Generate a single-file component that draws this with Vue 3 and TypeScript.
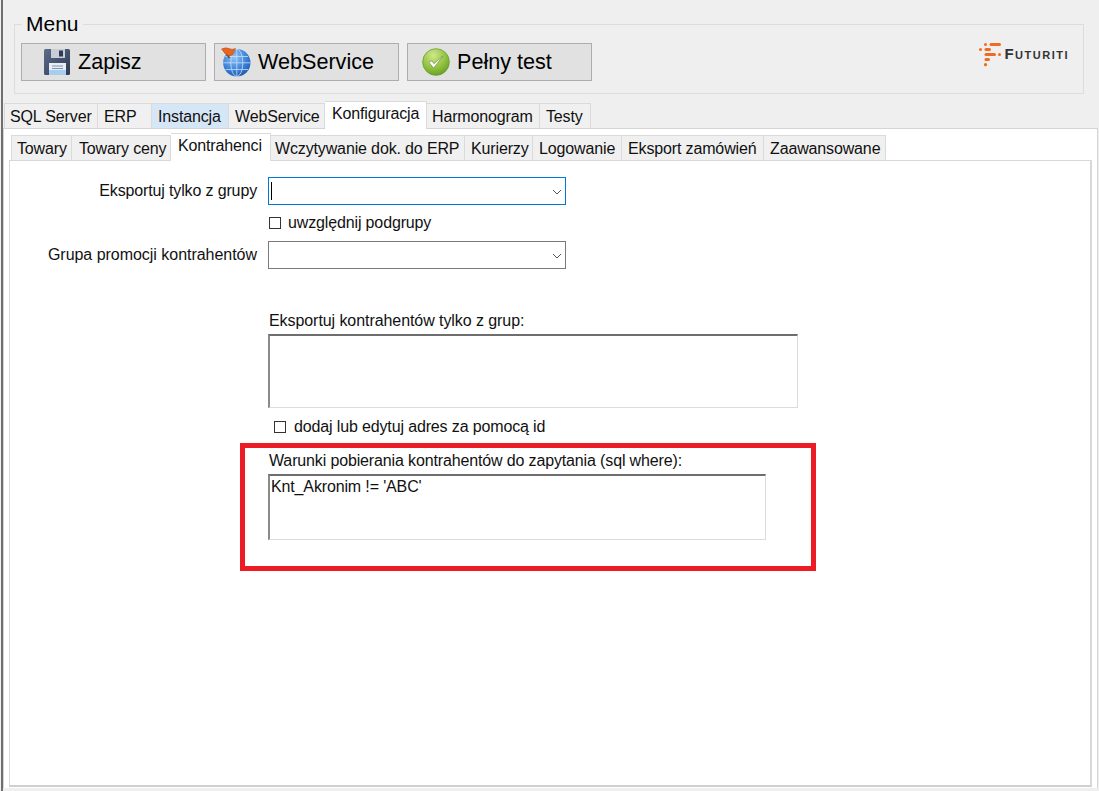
<script setup lang="ts">
interface Tab { label: string; width: number; pad: number; active?: boolean; hint?: boolean }
const mainTabs: Tab[] = [
  { label: 'SQL Server', width: 94, pad: 5 },
  { label: 'ERP', width: 54, pad: 6 },
  { label: 'Instancja', width: 77, pad: 6, hint: true },
  { label: 'WebService', width: 96, pad: 6 },
  { label: 'Konfiguracja', width: 102, pad: 7, active: true },
  { label: 'Harmonogram', width: 113, pad: 5 },
  { label: 'Testy', width: 51, pad: 6 },
]
const subTabs: Tab[] = [
  { label: 'Towary', width: 61, pad: 5 },
  { label: 'Towary ceny', width: 99, pad: 7 },
  { label: 'Kontrahenci', width: 100, pad: 7, active: true },
  { label: 'Wczytywanie dok. do ERP', width: 194, pad: 4 },
  { label: 'Kurierzy', width: 68, pad: 6 },
  { label: 'Logowanie', width: 89, pad: 6 },
  { label: 'Eksport zamówień', width: 142, pad: 6 },
  { label: 'Zaawansowane', width: 122, pad: 6 },
]
</script>

<template>
  <div class="window">
    <fieldset class="menu">
      <legend>Menu</legend>
      <div class="menu-row">
        <button class="btn btn-save" type="button">
          <svg width="28" height="28" viewBox="0 0 28 28">
            <defs>
              <linearGradient id="disk" x1="0" y1="0" x2="1" y2="1">
                <stop offset="0" stop-color="#5c6d8a" />
                <stop offset="1" stop-color="#2e3a52" />
              </linearGradient>
            </defs>
            <path d="M1 2.5 Q1 1 2.5 1 H25.5 Q27 1 27 2.5 V25.5 Q27 27 25.5 27 H2.5 Q1 27 1 25.5 Z" fill="url(#disk)" />
            <rect x="8" y="1" width="14" height="9" fill="#c9ced6" />
            <rect x="16" y="2.5" width="4" height="6" fill="#2f3b52" />
            <rect x="6" y="15" width="17" height="12" fill="#e8eef6" />
            <rect x="6" y="22" width="17" height="5" fill="#a9cdf0" />
            <path d="M9 18 H20 M9 20.5 H20" stroke="#7b93b5" stroke-width="1" />
          </svg>
          <span>Zapisz</span>
        </button>
        <button class="btn btn-web" type="button">
          <svg width="30" height="30" viewBox="0 0 30 30">
            <defs>
              <radialGradient id="globe" cx="0.4" cy="0.3" r="0.8">
                <stop offset="0" stop-color="#8ec3f5" />
                <stop offset="0.6" stop-color="#3a80d8" />
                <stop offset="1" stop-color="#1c4fa8" />
              </radialGradient>
            </defs>
            <circle cx="15.8" cy="15.8" r="13.7" fill="url(#globe)" />
            <g fill="none" stroke="#cfe3f8" stroke-width="0.9" opacity="0.85">
              <ellipse cx="15.8" cy="15.8" rx="6" ry="13.7" />
              <path d="M15.8 2.1 V29.5 M2.1 15.8 H29.5 M4.5 9.5 H27 M4.5 22.5 H27" />
            </g>
            <path d="M2.5 3 L8.5 11" stroke="#6b4a2a" stroke-width="1.6" />
            <path d="M0.5 2 Q5 0 8 1.5 T14.5 1.5 L11.5 8 Q8.5 10 4.5 7 Z" fill="#e8651f" stroke="#b9481a" stroke-width="0.5" />
          </svg>
          <span>WebService</span>
        </button>
        <button class="btn btn-test" type="button">
          <svg width="28" height="28" viewBox="0 0 30 30">
            <defs>
              <radialGradient id="ok" cx="0.4" cy="0.25" r="0.85">
                <stop offset="0" stop-color="#cfe88a" />
                <stop offset="0.6" stop-color="#8cbf3c" />
                <stop offset="1" stop-color="#5d9622" />
              </radialGradient>
            </defs>
            <circle cx="15" cy="15" r="14.3" fill="url(#ok)" stroke="#6a9f2c" stroke-width="0.8" />
            <path d="M7.5 15.5 L12.5 21.5 L22.5 8.5 L12.8 16.8 L10.4 13.6 Z" fill="#fff" stroke="#6b8f3f" stroke-width="0.7" stroke-linejoin="round" />
          </svg>
          <span>Pełny test</span>
        </button>
        <div class="logo">
          <svg width="23" height="24" viewBox="0 0 23 24">
            <g fill="#f26a21">
              <circle cx="6.5" cy="1.5" r="1.5" />
              <rect x="10.5" y="0" width="11.5" height="3" rx="1.5" />
              <circle cx="1.5" cy="6.5" r="1.5" />
              <rect x="5.5" y="5" width="6.5" height="3" rx="1.5" />
              <rect x="5.5" y="10" width="11.5" height="3" rx="1.5" />
              <circle cx="20.5" cy="11.5" r="1.5" />
              <rect x="5.5" y="15" width="5.5" height="3" rx="1.5" />
              <circle cx="6.5" cy="21.7" r="1.6" />
            </g>
          </svg>
          <span class="logo-text">Futuriti</span>
        </div>
      </div>
    </fieldset>

    <div class="tabs tabs-main">
      <div
        v-for="t in mainTabs"
        :key="t.label"
        class="tab"
        :class="{ active: t.active, hint: t.hint }"
        :style="{ width: t.width + 'px', paddingLeft: t.pad + 'px' }"
      >{{ t.label }}</div>
    </div>
    <div class="panel">
      <div class="tabs tabs-sub">
        <div
          v-for="t in subTabs"
          :key="t.label"
          class="tab"
          :class="{ active: t.active }"
          :style="{ width: t.width + 'px', paddingLeft: t.pad + 'px' }"
        >{{ t.label }}</div>
      </div>
      <div class="page">
        <div class="field">
          <label class="field-label">Eksportuj tylko z grupy</label>
          <div class="combo focused">
            <span class="caret"></span>
            <svg class="chev" width="10" height="6" viewBox="0 0 10 6"><path d="M1 1 L5 5 L9 1" fill="none" stroke="#555" stroke-width="1" /></svg>
          </div>
        </div>
        <label class="check check-a"><span class="box"></span>uwzględnij podgrupy</label>
        <div class="field field-second">
          <label class="field-label label-wide">Grupa promocji kontrahentów</label>
          <div class="combo">
            <svg class="chev" width="10" height="6" viewBox="0 0 10 6"><path d="M1 1 L5 5 L9 1" fill="none" stroke="#555" stroke-width="1" /></svg>
          </div>
        </div>
        <div class="block block-groups">
          <div class="block-label label-groups">Eksportuj kontrahentów tylko z grup:</div>
          <div class="listbox listbox-groups"></div>
        </div>
        <label class="check check-b"><span class="box"></span>dodaj lub edytuj adres za pomocą id</label>
        <div class="highlight">
          <div class="block-label">Warunki pobierania kontrahentów do zapytania (sql where):</div>
          <div class="listbox listbox-sql">Knt_Akronim != 'ABC'</div>
        </div>
      </div>
    </div>
  </div>
</template>

<style>
html, body { margin: 0; background: #f0f0f0; overflow: hidden; }
</style>

<style scoped>
.window {
  box-sizing: border-box;
  width: 1098px;
  height: 791px;
  margin-left: 1px;
  background: #efefef;
  border-left: 2px solid #6f6f6f;
  padding-top: 13px;
  font-family: "Liberation Sans", Arial, sans-serif;
  font-size: 16px;
  letter-spacing: -0.14px;
  color: #111;
  overflow: hidden;
}
.menu {
  box-sizing: border-box;
  margin: 0 0 0 11px;
  padding: 0 6px;
  width: 1070px;
  height: 81px;
  border: 1px solid #dcdcdc;
}
.menu legend {
  margin-left: 1px;
  padding: 0 4px;
  font-size: 21px;
  line-height: 22px;
  letter-spacing: 0;
  color: #000;
}
.menu-row {
  display: flex;
  align-items: flex-start;
  margin-top: 8px;
}
.btn {
  box-sizing: border-box;
  display: flex;
  align-items: center;
  width: 185px;
  height: 38px;
  padding: 0;
  background: #e1e1e1;
  border: 1px solid #adadad;
  font: inherit;
  font-size: 21.6px;
  letter-spacing: 0;
  color: #000;
}
.btn-save { padding-left: 21px; gap: 7px; margin-right: 8px; }
.btn-web { padding-left: 6px; gap: 7px; margin-right: 8px; }
.btn-test { padding-left: 14px; gap: 7px; }
.logo {
  display: flex;
  align-items: center;
  margin-left: auto;
  margin-right: 8px;
  gap: 2px;
}
.logo-text {
  font-variant: small-caps;
  font-weight: 700;
  font-size: 15px;
  letter-spacing: 1.5px;
  color: #333;
  margin-bottom: 3px;
}
.tabs { display: flex; align-items: flex-end; }
.tabs-main { margin: 8px 0 0 1px; height: 26px; position: relative; z-index: 2; }
.tab {
  box-sizing: border-box;
  height: 25px;
  background: #f0f0f0;
  border: 1px solid #dadada;
  border-bottom: none;
  border-left: none;
  line-height: 25px;
  white-space: nowrap;
}
.tab:first-child { border-left: 1px solid #dadada; }
.tab.hint { background: #d5e6f6; }
.tab.active {
  height: 28px;
  background: #fff;
  line-height: 24px;
  margin-bottom: -1px;
}
.panel {
  box-sizing: border-box;
  width: 1095px;
  height: 660px;
  background: #fff;
  border: 1px solid #d4d4d4;
  border-bottom: none;
  padding: 5px 0 0 5px;
}
.tabs-sub { height: 26px; margin-left: 2px; position: relative; z-index: 2; }
.page {
  box-sizing: border-box;
  width: 1083px;
  height: 627px;
  border: 1px solid #d8d8d8;
  border-right-width: 2px;
  border-bottom: 2px solid #cfcfcf;
  padding-top: 16px;
}
.field { display: flex; align-items: center; }
.field-label {
  width: 247px;
  text-align: right;
  margin-right: 11px;
}
.label-wide { letter-spacing: -0.03px; }
.combo {
  box-sizing: border-box;
  width: 298px;
  height: 28px;
  border: 1px solid #7a7a7a;
  position: relative;
  background: #fff;
}
.combo.focused { border-color: #0078d7; }
.caret {
  position: absolute;
  left: 2px;
  top: 4px;
  width: 1px;
  height: 18px;
  background: #000;
}
.chev { position: absolute; right: 3px; top: 11px; }
.check { display: flex; align-items: center; }
.box {
  box-sizing: border-box;
  width: 12px;
  height: 12px;
  border: 1px solid #333;
  background: #fff;
  margin-right: 7px;
  flex: none;
}
.check-a { margin: 9px 0 0 259px; height: 18px; }
.field-second { margin-top: 9px; }
.block { margin-left: 258px; }
.block-groups { margin-top: 43px; }
.block-label { line-height: 18px; height: 18px; padding-left: 1px; }
.label-groups { letter-spacing: -0.07px; }
.listbox {
  box-sizing: border-box;
  margin-top: 4px;
  background: #fff;
  border: 1px solid #dcdcdc;
  border-top: 2px solid #6e6e6e;
  border-left: 2px solid #8a8a8a;
  padding: 2px 0 0 1px;
  line-height: 18px;
}
.listbox-groups { width: 530px; height: 74px; }
.check-b { margin: 10px 0 0 264px; height: 18px; }
.check-b .box { margin-right: 8px; }
.highlight {
  box-sizing: border-box;
  width: 576px;
  height: 128px;
  margin: 7px 0 0 230px;
  border: 5px solid #ed1c24;
  padding: 4px 0 0 23px;
}
.listbox-sql { width: 498px; height: 66px; margin-top: 4px; }
</style>
